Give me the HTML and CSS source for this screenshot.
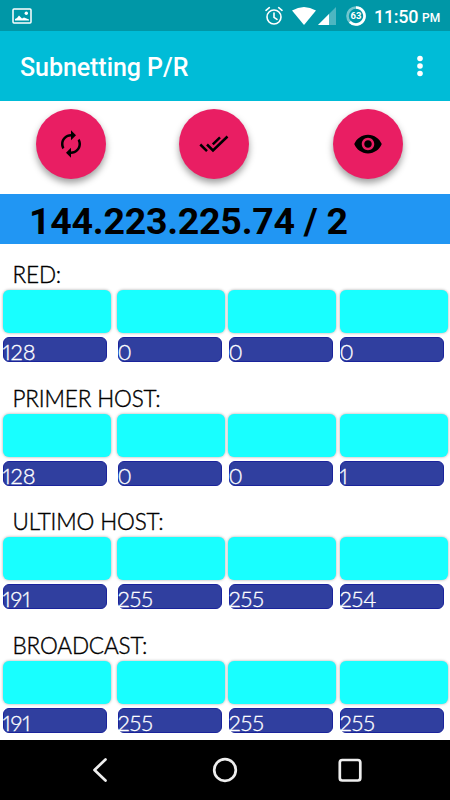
FILE: index.html
```html
<!DOCTYPE html>
<html lang="es">
<head>
  <meta charset="UTF-8" />
  <meta name="viewport" content="width=device-width, initial-scale=1" />
  <title>Subnetting P/R</title>
  <link rel="stylesheet" href="styles.css">
</head>
<body>
  <div class="status-bar">
    <svg class="picture" width="20" height="16" viewBox="0 0 20 16">
      <rect x="1" y="1" width="18" height="14" rx="1" fill="none" stroke="#fff" stroke-width="1.5" />
      <path d="M3 12.500V11l2-1 2-2.500 3 3 2-1 5 2v1z" fill="#fff" />
      <circle cx="14.300" cy="5.200" r="1.700" fill="#fff" />
    </svg>
    <svg class="alarm" width="18" height="20" viewBox="0 0 18 20" fill="none" stroke="#fff" stroke-width="1.600" stroke-linecap="round">
      <circle cx="9" cy="11" r="7" />
      <path d="M9 7v4.300l3 2M1 4.300L4.300 1.700M17 4.300L13.700 1.700" />
    </svg>
    <svg class="wifi" width="24" height="18" viewBox="0 0 24 18">
      <path d="M0 3.600Q12-3.400 24 3.600L12 18z" fill="#fff" />
    </svg>
    <svg class="signal" width="18" height="18" viewBox="0 0 18 18">
      <path d="M18 0v18H0z" fill="#fff" fill-opacity=".3" />
      <path d="M11 7v11H0z" fill="#fff" />
    </svg>
    <svg class="battery" width="20" height="20" viewBox="0 0 20 20">
      <circle cx="10" cy="10" r="8.500" fill="none" stroke="#fff" stroke-opacity=".45" stroke-width="2.600" />
      <path d="M10 1.500a8.500 8.500 0 1 1-6.200 14.300" fill="none" stroke="#fff" stroke-width="2.600" />
      <text class="battery-text" x="10" y="13.400" text-anchor="middle">63</text>
    </svg>
    <span class="clock">11:50</span><span class="period">PM</span>
  </div>

  <header>
    <h1>Subnetting P/R</h1>
    <svg width="8" height="22" viewBox="0 0 8 22" fill="#fff">
      <circle cx="4" cy="3.500" r="2.800" />
      <circle cx="4" cy="11" r="2.800" />
      <circle cx="4" cy="18.500" r="2.800" />
    </svg>
  </header>

  <div class="actions">
    <button class="fab" aria-label="Generar">
      <svg width="30" height="30" viewBox="0 0 24 24">
        <path d="M12 6v3l4-4-4-4v3c-4.420 0-8 3.580-8 8 0 1.570.46 3.030 1.240 4.260L6.700 14.800A5.870 5.870 0 0 1 6 12c0-3.310 2.690-6 6-6zm6.760 1.740L17.300 9.200c.44.84.7 1.790.7 2.800 0 3.310-2.690 6-6 6v-3l-4 4 4 4v-3c4.420 0 8-3.580 8-8 0-1.570-.46-3.030-1.240-4.260z" />
      </svg>
    </button>
    <button class="fab" aria-label="Comprobar">
      <svg width="30" height="30" viewBox="0 0 30 30" fill="none" stroke="#000" stroke-width="2.500">
        <path d="M1.300 15.500L8 22.200M8 15.500l6 6L28.500 7.500M13.800 15.300l7.200-7" />
      </svg>
    </button>
    <button class="fab" aria-label="Ver">
      <svg width="30" height="30" viewBox="0 0 24 24">
        <path d="M12 4.500C7 4.500 2.730 7.610 1 12c1.730 4.390 6 7.500 11 7.500s9.270-3.110 11-7.500c-1.730-4.390-6-7.500-11-7.500zM12 17c-2.760 0-5-2.240-5-5s2.240-5 5-5 5 2.240 5 5-2.240 5-5 5zm0-8c-1.660 0-3 1.340-3 3s1.340 3 3 3 3-1.340 3-3-1.340-3-3-3z" />
      </svg>
    </button>
  </div>

  <div class="address">144.223.225.74 / 2</div>

  <main>
    <section>
      <h2>RED:</h2>
      <div class="row">
        <div class="field"></div><div class="field"></div><div class="field"></div><div class="field"></div>
      </div>
      <div class="row answers">
        <div class="answer">128</div><div class="answer">0</div><div class="answer">0</div><div class="answer">0</div>
      </div>
    </section>
    <section>
      <h2>PRIMER HOST:</h2>
      <div class="row">
        <div class="field"></div><div class="field"></div><div class="field"></div><div class="field"></div>
      </div>
      <div class="row answers">
        <div class="answer">128</div><div class="answer">0</div><div class="answer">0</div><div class="answer">1</div>
      </div>
    </section>
    <section>
      <h2>ULTIMO HOST:</h2>
      <div class="row">
        <div class="field"></div><div class="field"></div><div class="field"></div><div class="field"></div>
      </div>
      <div class="row answers">
        <div class="answer">191</div><div class="answer">255</div><div class="answer">255</div><div class="answer">254</div>
      </div>
    </section>
    <section>
      <h2>BROADCAST:</h2>
      <div class="row">
        <div class="field"></div><div class="field"></div><div class="field"></div><div class="field"></div>
      </div>
      <div class="row answers">
        <div class="answer">191</div><div class="answer">255</div><div class="answer">255</div><div class="answer">255</div>
      </div>
    </section>
  </main>

  <nav>
    <svg width="30" height="30" viewBox="0 0 30 30"><path d="M20.500 4.500L9.500 15l11 10.500" /></svg>
    <svg width="30" height="30" viewBox="0 0 30 30"><circle cx="15" cy="15" r="10.800" /></svg>
    <svg width="30" height="30" viewBox="0 0 30 30"><rect x="4.800" y="5" width="20.500" height="20.500" rx="2.500" /></svg>
  </nav>
</body>
</html>
```
FILE: styles.css
```css
* { box-sizing: border-box; }
body { margin: 0; height: 800px; overflow: hidden; display: flex; flex-direction: column; background-color: #fff; font-family: Roboto, sans-serif; color: #000; }
svg { display: block; flex: none; }

.status-bar { height: 31px; flex: none; display: flex; align-items: center; padding: 0 10px 0 12px; background-color: #0097a7; color: #fff; }
.alarm { margin-left: auto; }
.wifi { margin-left: 9px; }
.signal { margin-left: 2px; margin-top: 1px; }
.battery { margin-left: 10px; }
.battery-text { fill: #fff; font-size: 9.500px; font-weight: 700; }
.clock { width: 44px; margin-left: 8px; padding-top: 1px; font-size: 18px; font-weight: 500; letter-spacing: -0.300px; white-space: nowrap; }
.period { width: 18px; margin-left: 4px; padding-top: 5px; font-size: 12px; font-weight: 500; }

header { height: 70px; flex: none; display: flex; align-items: center; justify-content: space-between; padding: 0 26px 0 20px; background-color: #00bcd7; color: #fff; }
header h1 { margin: 4px 0 0; font-size: 25px; font-weight: 500; line-height: 30px; letter-spacing: -0.060px; white-space: nowrap; }

.actions { height: 93px; flex: none; display: flex; padding: 8px 0 0 36px; }
.fab { width: 70px; height: 70px; display: flex; align-items: center; justify-content: center; padding: 0; border: none; border-radius: 50%; background-color: #e91e63; box-shadow: 0 4px 7px rgba(0, 0, 0, 0.38); }
.fab + .fab { margin-left: 73px; }
.fab + .fab + .fab { margin-left: 83.500px; }

.address { height: 50px; flex: none; padding: 2px 0 0 29px; background-color: #2196f3; font-size: 37.500px; font-weight: 700; line-height: 50px; letter-spacing: -0.250px; white-space: nowrap; }

main { flex: 1; min-height: 0; overflow: hidden; padding-top: 15px; font-family: Lato, sans-serif; font-weight: 300; }
section { height: 123.700px; }
h2 { height: 31px; margin: 0; padding-left: 12.500px; font-size: 22.500px; font-weight: 300; line-height: 31px; letter-spacing: -0.150px; white-space: nowrap; -webkit-text-stroke: 0.400px #000; }
.row { display: grid; grid-template-columns: 113.500px 111.500px 112px 108px; padding-left: 3px; }
.field { width: 108px; height: 43px; border-radius: 6px; background-color: #18ffff; box-shadow: 0 0 3px rgba(0, 0, 0, 0.35); }
.answers { grid-template-columns: 115px 111px 111px 103px; margin-top: 4px; padding-left: 2.500px; }
.answer { width: 104px; height: 25px; border-radius: 6px; border: 1px solid #1a239b; background-color: #303f9f; color: #fff; font-size: 22px; line-height: 27px; text-indent: -1px; font-variant-numeric: proportional-nums; letter-spacing: -0.200px; -webkit-text-stroke: 0.300px #fff; }

nav { height: 60px; flex: none; display: flex; align-items: center; justify-content: center; gap: 95px; background-color: #000; }
nav svg { fill: none; stroke: #eee; stroke-width: 2.700; stroke-linecap: round; stroke-linejoin: round; }
```
